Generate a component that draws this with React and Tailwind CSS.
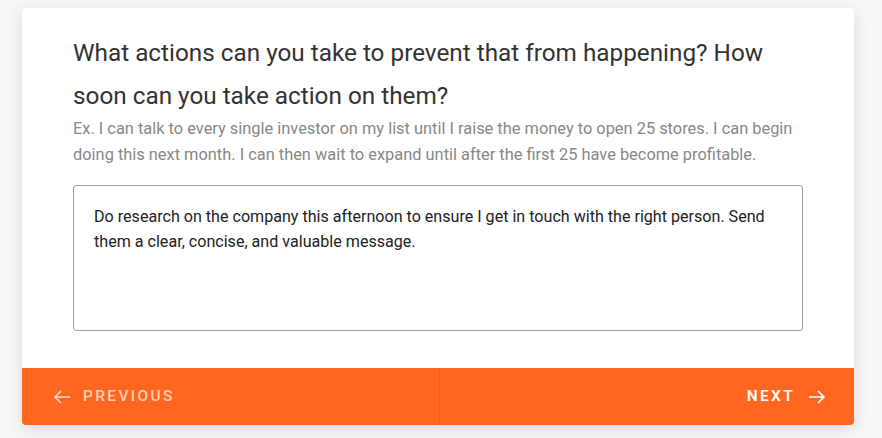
import React from 'react'

function Arrow({ dir = 'right', className = '' }) {
  return (
    <svg width="18" height="14" viewBox="0 0 18 14" fill="none" stroke="currentColor" strokeWidth="1.6" className={className}>
      {dir === 'right' ? (
        <>
          <path d="M1 7h15" />
          <path d="M10 1l6 6-6 6" />
        </>
      ) : (
        <>
          <path d="M17 7H2" />
          <path d="M8 1L2 7l6 6" />
        </>
      )}
    </svg>
  )
}

export default function App() {
  return (
    <div className="w-[882px] h-[438px] bg-[#f7f7f7] pt-[8px] pl-[22px] overflow-hidden" style={{ fontFamily: 'Roboto, "Liberation Sans", sans-serif' }}>
      <div className="w-[832px] bg-white rounded-[4px] shadow-[0_4px_16px_rgba(0,0,0,0.12)] flex flex-col">
        <div className="px-[51px] pt-[23px] pb-[37px]">
          <h2 className="text-[24.3px] leading-[43px] text-[#333] font-normal">
            What actions can you take to prevent that from happening? How soon can you take action on them?
          </h2>
          <p className="text-[16.4px] leading-[26px] text-[#888] mt-[-1px]">
            Ex. I can talk to every single investor on my list until I raise the money to open 25 stores. I can begin doing this next month. I can then wait to expand until after the first 25 have become profitable.
          </p>
          <div className="mt-[17px] h-[146px] border border-[#a0a0a0] rounded-[3px] px-[20px] pt-[18px] text-[16.1px] leading-[25px] text-[#222]">
            Do research on the company this afternoon to ensure I get in touch with the right person. Send them a clear, concise, and valuable message.
          </div>
        </div>
        <div className="h-[57px] bg-[#ff6720] rounded-b-[4px] flex">
          <button className="flex-1 flex items-center gap-[12px] pl-[31px] text-white/70 border-r border-[#f36019] text-[15.5px] font-medium tracking-[0.15em]">
            <Arrow dir="left" />
            PREVIOUS
          </button>
          <button className="flex-1 flex items-center justify-end gap-[13px] pr-[28px] text-white text-[15.5px] font-semibold tracking-[0.15em]">
            NEXT
            <Arrow dir="right" />
          </button>
        </div>
      </div>
    </div>
  )
}
